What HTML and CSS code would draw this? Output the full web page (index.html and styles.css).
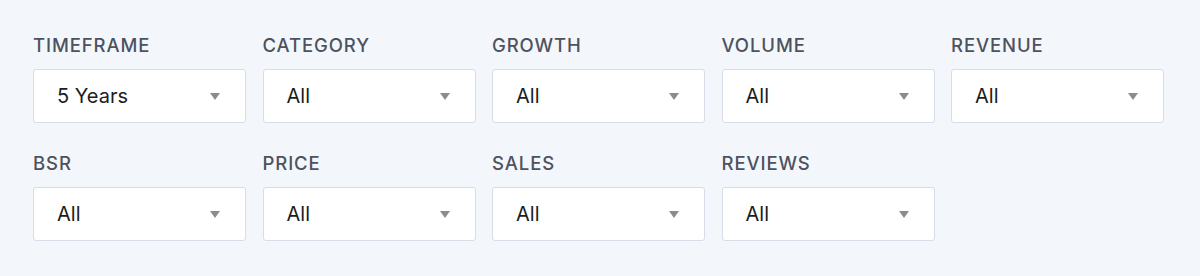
FILE: index.html
```html
<!DOCTYPE html>
<html lang="en">

<head>
    <meta charset="UTF-8">
    <meta name="viewport" content="width=device-width, initial-scale=1.0">
    <title>Filters</title>
    <link rel="stylesheet" href="styles.css">
</head>

<body>
    <div class="filters">
        <div class="filter">
            <div class="filter-label">TIMEFRAME</div>
            <div class="select"><span>5 Years</span><span class="caret"></span></div>
        </div>
        <div class="filter">
            <div class="filter-label">CATEGORY</div>
            <div class="select"><span>All</span><span class="caret"></span></div>
        </div>
        <div class="filter">
            <div class="filter-label">GROWTH</div>
            <div class="select"><span>All</span><span class="caret"></span></div>
        </div>
        <div class="filter">
            <div class="filter-label">VOLUME</div>
            <div class="select"><span>All</span><span class="caret"></span></div>
        </div>
        <div class="filter">
            <div class="filter-label">REVENUE</div>
            <div class="select"><span>All</span><span class="caret"></span></div>
        </div>
        <div class="filter">
            <div class="filter-label">BSR</div>
            <div class="select"><span>All</span><span class="caret"></span></div>
        </div>
        <div class="filter">
            <div class="filter-label">PRICE</div>
            <div class="select"><span>All</span><span class="caret"></span></div>
        </div>
        <div class="filter">
            <div class="filter-label">SALES</div>
            <div class="select"><span>All</span><span class="caret"></span></div>
        </div>
        <div class="filter">
            <div class="filter-label">REVIEWS</div>
            <div class="select"><span>All</span><span class="caret"></span></div>
        </div>
    </div>
</body>

</html>
```

FILE: styles.css
```css
body {
    font-family: Inter, "Noto Sans", sans-serif;
    margin: 0;
    background-color: #f3f7fc;
}

.filters {
    display: grid;
    grid-template-columns: repeat(5, 213px);
    column-gap: 16.5px;
    row-gap: 29px;
    padding: 34px 33px;
}

.filter-label {
    font-size: 18.5px;
    line-height: 22px;
    font-weight: 500;
    color: #4d525e;
    letter-spacing: 0.9px;
    margin-bottom: 13px;
}

.select {
    height: 54px;
    box-sizing: border-box;
    display: flex;
    align-items: center;
    justify-content: space-between;
    padding: 0 25px 0 23px;
    background-color: #ffffff;
    border: 1px solid #d6dde8;
    border-radius: 3px;
    font-size: 20px;
    color: #1b1d22;
}

.caret {
    width: 0;
    height: 0;
    border-left: 5px solid transparent;
    border-right: 5px solid transparent;
    border-top: 7px solid #8c8c8c;
}
```
